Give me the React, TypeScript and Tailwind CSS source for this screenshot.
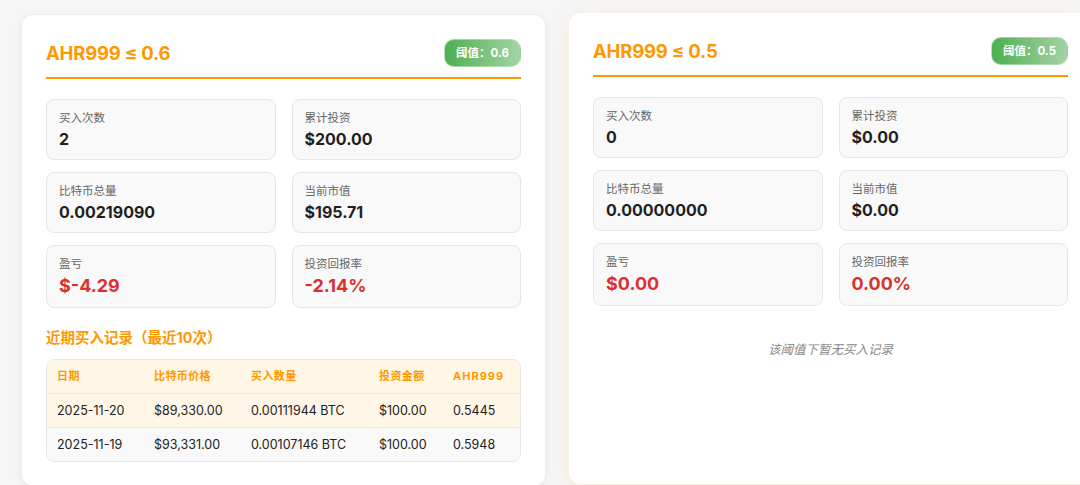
import React from "react";

const FONT = 'Inter, "Noto Sans CJK SC", "Noto Sans", sans-serif';

type Stat = { label: string; value: string; red?: boolean };

function StatBox({ s }: { s: Stat }) {
  return (
    <div className="rounded-lg border border-[#e6e6e6] bg-[#f9f9f9] px-3 pt-[10px] pb-[10px]">
      <div className="text-[11.5px] leading-[16px] text-[#666]">{s.label}</div>
      <div
        className={
          s.red
            ? "mt-[3px] text-[18px] leading-[22px] font-bold text-[#dc3030]"
            : "mt-[3px] text-[16px] leading-[20px] font-bold text-[#1f1f1f]"
        }
      >
        {s.value}
      </div>
    </div>
  );
}

type Row = { date: string; price: string; amount: string; invest: string; ahr: string };

const TH = "px-[10px] py-[8px] text-[11px] leading-[17px] font-bold tracking-[0.4px] text-[#ff9800]";
const TD = "px-[10px] py-[7px] leading-[19px]";

function Card({
  threshold,
  stats,
  rows,
  hovered,
}: {
  threshold: string;
  stats: Stat[];
  rows: Row[];
  hovered?: boolean;
}) {
  return (
    <div
      className={
        hovered
          ? "-translate-y-0.5 rounded-xl bg-white px-6 pt-6 pb-6 shadow-[0_6px_22px_rgba(255,152,0,0.14)]"
          : "rounded-xl bg-white px-6 pt-6 pb-6 shadow-[0_2px_10px_rgba(0,0,0,0.08)]"
      }
    >
      <div className="flex items-center justify-between border-b-2 border-[#ff9800] pb-[10px]">
        <div className="text-[18.5px] leading-[28px] font-bold tracking-[-0.2px] text-[#ff9800]">
          AHR999 ≤ {threshold}
        </div>
        <div className="rounded-[10px] border border-[#c8e6c9]/60 bg-gradient-to-r from-[#4caf50] to-[#a3d3a5] px-[11px] py-[5px] text-[11.5px] leading-[16px] font-bold text-white">
          阈值：{threshold}
        </div>
      </div>
      <div className="mt-5 grid grid-cols-2 gap-x-4 gap-y-3">
        {stats.map((s) => (
          <StatBox key={s.label} s={s} />
        ))}
      </div>
      {rows.length > 0 ? (
        <>
          <div className="mt-5 text-[14.5px] leading-[20px] font-bold text-[#ff9800]">近期买入记录（最近10次）</div>
          <div className="mt-[11px] overflow-hidden rounded-lg border border-[#e6e6e6]">
            <table className="w-full border-collapse text-left">
              <thead>
                <tr className="bg-[#fff6e5]">
                  <th className={"w-[97px] " + TH}>日期</th>
                  <th className={"w-[97px] " + TH}>比特币价格</th>
                  <th className={"w-[128px] " + TH}>买入数量</th>
                  <th className={"w-[74px] " + TH}>投资金额</th>
                  <th className="px-[10px] py-[8px] text-[11px] leading-[17px] font-bold tracking-[1px] text-[#ff9800]">AHR999</th>
                </tr>
              </thead>
              <tbody>
                {rows.map((r, i) => (
                  <tr
                    key={r.date}
                    className={
                      i === 0
                        ? "border-t border-[#e8e8e8] bg-[#fff6e8] text-[12.5px] text-[#222]"
                        : "border-t border-[#e8e8e8] bg-[#f9f9f9] text-[12.5px] text-[#222]"
                    }
                  >
                    <td className={TD}>{r.date}</td>
                    <td className={TD}>{r.price}</td>
                    <td className={TD}>{r.amount}</td>
                    <td className={TD}>{r.invest}</td>
                    <td className={TD}>{r.ahr}</td>
                  </tr>
                ))}
              </tbody>
            </table>
          </div>
        </>
      ) : (
        <div className="mt-[34px] text-center text-[12.5px] leading-[20px] italic text-[#888]">该阈值下暂无买入记录</div>
      )}
    </div>
  );
}

export default function App() {
  const left: Stat[] = [
    { label: "买入次数", value: "2" },
    { label: "累计投资", value: "$200.00" },
    { label: "比特币总量", value: "0.00219090" },
    { label: "当前市值", value: "$195.71" },
    { label: "盈亏", value: "$-4.29", red: true },
    { label: "投资回报率", value: "-2.14%", red: true },
  ];
  const right: Stat[] = [
    { label: "买入次数", value: "0" },
    { label: "累计投资", value: "$0.00" },
    { label: "比特币总量", value: "0.00000000" },
    { label: "当前市值", value: "$0.00" },
    { label: "盈亏", value: "$0.00", red: true },
    { label: "投资回报率", value: "0.00%", red: true },
  ];
  const rows: Row[] = [
    { date: "2025-11-20", price: "$89,330.00", amount: "0.00111944 BTC", invest: "$100.00", ahr: "0.5445" },
    { date: "2025-11-19", price: "$93,331.00", amount: "0.00107146 BTC", invest: "$100.00", ahr: "0.5948" },
  ];
  return (
    <div className="h-[485px] w-[1080px] overflow-hidden bg-[#f6f6f6]" style={{ fontFamily: FONT }}>
      <div className="grid w-[1094px] grid-cols-[523px_523px] gap-6 pt-[15px] pl-[22px]">
        <Card threshold="0.6" stats={left} rows={rows} />
        <Card threshold="0.5" stats={right} rows={[]} hovered />
      </div>
    </div>
  );
}
